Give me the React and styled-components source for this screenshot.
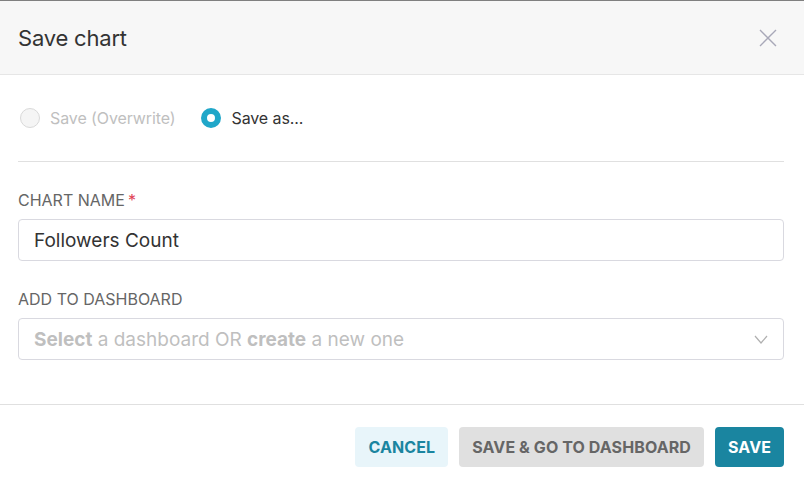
import React from 'react';
import styled, { createGlobalStyle } from 'styled-components';

const GlobalStyle = createGlobalStyle`
  html, body {
    margin: 0;
    padding: 0;
    background: #fff;
  }
  body {
    font-family: Inter, 'Noto Sans', sans-serif;
    color: #333;
  }
`;

const Modal = styled.div`
  width: 804px;
  height: 481px;
  box-sizing: border-box;
  border-top: 1px solid #808080;
  display: flex;
  flex-direction: column;
  background: #fff;
`;

const Header = styled.div`
  height: 74px;
  flex-shrink: 0;
  box-sizing: border-box;
  background: #f7f7f7;
  border-bottom: 1px solid #e6e6e6;
  display: flex;
  align-items: center;
  justify-content: space-between;
  padding: 0 27px 0 18px;
`;

const Title = styled.h4`
  margin: 0;
  font-size: 22px;
  font-weight: 400;
  color: #333;
  letter-spacing: -0.2px;
`;

const CloseButton = styled.button`
  border: 0;
  background: none;
  padding: 0;
  width: 18px;
  height: 18px;
  display: flex;
  cursor: pointer;
`;

const Body = styled.div`
  padding: 0 20px 0 18px;
  flex: 1;
`;

const RadioRow = styled.div`
  display: flex;
  align-items: center;
  gap: 24px;
  height: 86px;
  border-bottom: 1px solid #e0e0e0;
`;

const RadioLabel = styled.label`
  display: flex;
  align-items: center;
  gap: 10px;
  font-size: 16px;
  letter-spacing: -0.1px;
  color: ${(p) => (p.disabled ? '#bfbfbf' : '#333')};
  margin-left: 2px;
`;

const RadioDot = styled.span`
  width: 20px;
  height: 20px;
  box-sizing: border-box;
  border-radius: 50%;
  border: ${(p) => (p.checked ? '6px solid #20a7c9' : '1px solid #d9d9d9')};
  background: ${(p) => (p.checked ? '#fff' : '#f5f5f5')};
`;

const Field = styled.div`
  margin-top: ${(p) => p.gap}px;
`;

const Label = styled.div`
  font-size: 16px;
  color: #666;
  margin-bottom: 10px;
  line-height: 18px;
`;

const Required = styled.span`
  color: #e04355;
  margin-left: 3px;
`;

const Input = styled.div`
  height: 42px;
  box-sizing: border-box;
  border: 1px solid #d9d9e0;
  border-radius: 4px;
  padding: 0 15px;
  display: flex;
  align-items: center;
  font-size: 19px;
  color: #333;
`;

const Select = styled(Input)`
  justify-content: space-between;
  color: #bfbfbf;
  padding-right: 14px;
`;

const Strong = styled.b`
  font-weight: 700;
`;

const Footer = styled.div`
  border-top: 1px solid #e0e0e0;
  height: 77px;
  flex-shrink: 0;
  display: flex;
  align-items: flex-start;
  justify-content: flex-end;
  gap: 11px;
  padding: 22px 20px 0;
  box-sizing: border-box;
`;

const Button = styled.button`
  height: 40px;
  border: 0;
  border-radius: 4px;
  padding: 0 13px;
  font-family: Inter, 'Noto Sans', sans-serif;
  font-size: 16px;
  font-weight: 700;
  letter-spacing: 0.1px;
  color: ${(p) => p.$fg};
  background: ${(p) => p.$bg};
  cursor: pointer;
`;

export default function App() {
  return (
    <>
      <GlobalStyle />
      <Modal>
        <Header>
          <Title>Save chart</Title>
          <CloseButton aria-label="close">
            <svg width="18" height="18" viewBox="0 0 18 18">
              <path d="M1 1L17 17M17 1L1 17" stroke="#a8a8b8" strokeWidth="1.4" />
            </svg>
          </CloseButton>
        </Header>
        <Body>
          <RadioRow>
            <RadioLabel disabled>
              <RadioDot />
              Save (Overwrite)
            </RadioLabel>
            <RadioLabel>
              <RadioDot checked />
              Save as...
            </RadioLabel>
          </RadioRow>
          <Field gap={29}>
            <Label>
              CHART NAME<Required>*</Required>
            </Label>
            <Input>Followers Count</Input>
          </Field>
          <Field gap={29}>
            <Label>ADD TO DASHBOARD</Label>
            <Select>
              <span>
                <Strong>Select</Strong> a dashboard OR <Strong>create</Strong> a new one
              </span>
              <svg width="16" height="16" viewBox="0 0 16 16">
                <path d="M2 5L8 12L14 5" fill="none" stroke="#b0b0b0" strokeWidth="1.2" />
              </svg>
            </Select>
          </Field>
        </Body>
        <Footer>
          <Button $bg="#e8f5fa" $fg="#1a85a0">CANCEL</Button>
          <Button $bg="#e0e0e0" $fg="#666">SAVE &amp; GO TO DASHBOARD</Button>
          <Button $bg="#1a85a0" $fg="#fff">SAVE</Button>
        </Footer>
      </Modal>
    </>
  );
}
